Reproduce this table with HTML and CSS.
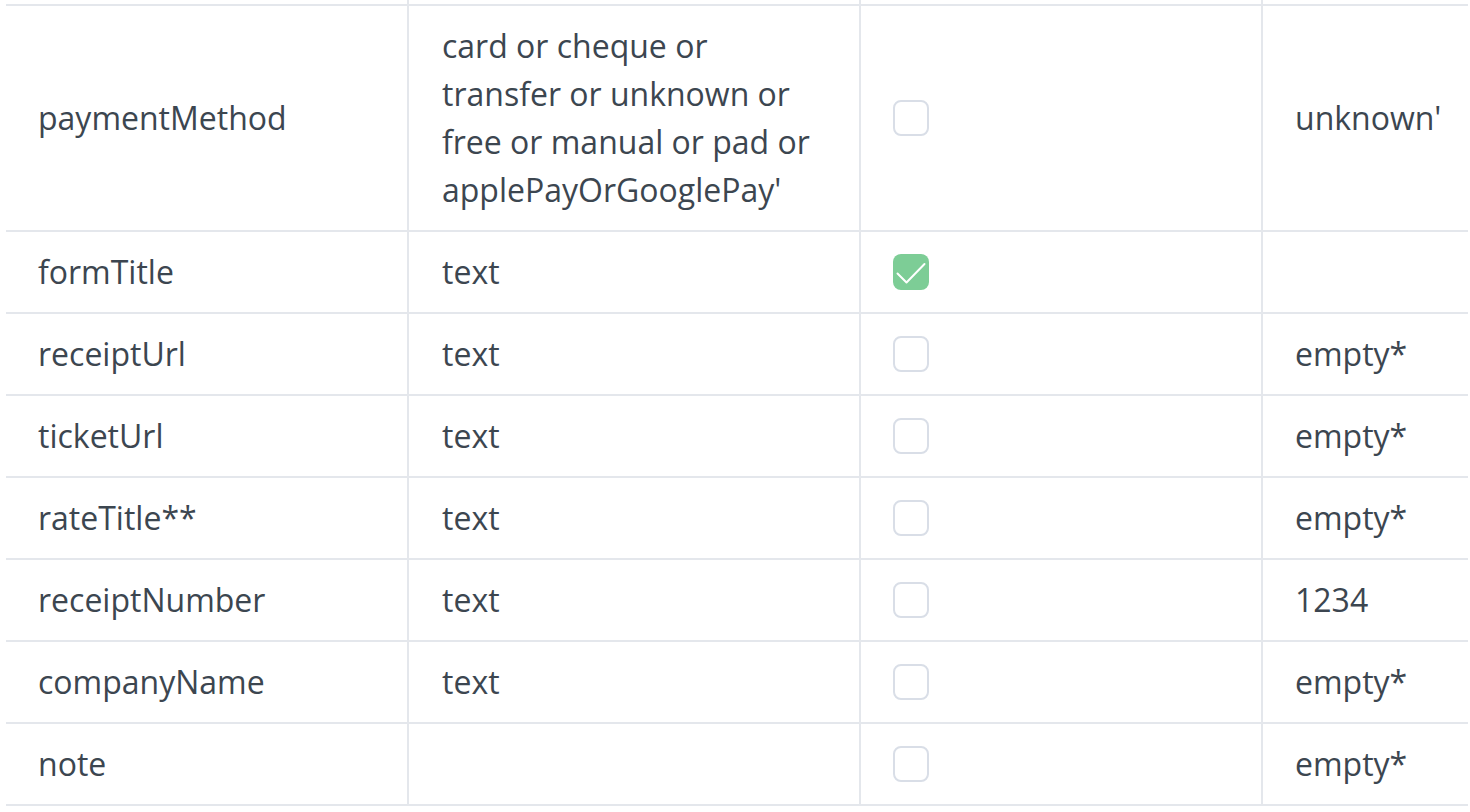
FILE: index.html
```html
<!DOCTYPE html>
<html lang="en">
<head>
<meta charset="utf-8">
<title>Fields</title>
<link rel="stylesheet" href="styles.css">
</head>
<body>
<div class="table">
  <div class="row stub">
    <div class="cell"></div><div class="cell"></div><div class="cell"></div><div class="cell"></div>
  </div>
  <div class="row">
    <div class="cell">paymentMethod</div>
    <div class="cell">card or cheque or transfer or unknown or free or manual or pad or applePayOrGooglePay'</div>
    <div class="cell"><span class="box"></span></div>
    <div class="cell">unknown'</div>
  </div>
  <div class="row">
    <div class="cell">formTitle</div>
    <div class="cell">text</div>
    <div class="cell"><span class="box checked"><svg viewBox="0 0 36 36" width="36" height="36"><path d="M4.5 19.5 L13.5 28.5 L31.5 10" fill="none" stroke="#fff" stroke-width="2" stroke-linecap="round" stroke-linejoin="round"/></svg></span></div>
    <div class="cell"></div>
  </div>
  <div class="row">
    <div class="cell">receiptUrl</div>
    <div class="cell">text</div>
    <div class="cell"><span class="box"></span></div>
    <div class="cell">empty*</div>
  </div>
  <div class="row">
    <div class="cell">ticketUrl</div>
    <div class="cell">text</div>
    <div class="cell"><span class="box"></span></div>
    <div class="cell">empty*</div>
  </div>
  <div class="row">
    <div class="cell">rateTitle**</div>
    <div class="cell">text</div>
    <div class="cell"><span class="box"></span></div>
    <div class="cell">empty*</div>
  </div>
  <div class="row">
    <div class="cell">receiptNumber</div>
    <div class="cell">text</div>
    <div class="cell"><span class="box"></span></div>
    <div class="cell">1234</div>
  </div>
  <div class="row">
    <div class="cell">companyName</div>
    <div class="cell">text</div>
    <div class="cell"><span class="box"></span></div>
    <div class="cell">empty*</div>
  </div>
  <div class="row">
    <div class="cell">note</div>
    <div class="cell"></div>
    <div class="cell"><span class="box"></span></div>
    <div class="cell">empty*</div>
  </div>
</div>
</body>
</html>
```

FILE: styles.css
```css
html, body {
  margin: 0;
  padding: 0;
  background: #ffffff;
  overflow: hidden;
}

body {
  font-family: "Open Sans", "Noto Sans", sans-serif;
  font-size: 32px;
  line-height: 48px;
  color: #3c4650;
}

.table {
  margin-left: 6px;
  width: 1462px;
}

.row {
  display: grid;
  grid-template-columns: 403px 452px 402px 1fr;
  border-bottom: 2px solid #e4e7ec;
}

.cell {
  display: flex;
  align-items: center;
  padding: 16px 30px 16px 33px;
  border-right: 2px solid #e4e7ec;
  min-height: 48px;
}

.cell:nth-child(1),
.cell:nth-child(3),
.cell:nth-child(4) {
  padding-left: 32px;
}

.cell:last-child {
  border-right: none;
}

.stub .cell {
  min-height: 0;
  height: 4px;
  padding: 0;
}

.box {
  display: block;
  box-sizing: border-box;
  width: 36px;
  height: 36px;
  border: 2px solid #d9dee7;
  border-radius: 8px;
  background: #fff;
}

.box.checked {
  border: none;
  background: #7dcd96;
}

.box svg {
  display: block;
}
```
